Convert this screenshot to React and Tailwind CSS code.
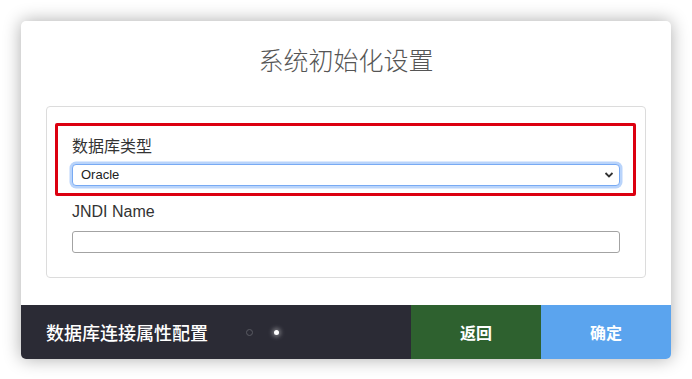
import React from 'react';

const cjk = { fontFamily: '"Noto Sans CJK SC", "Liberation Sans", sans-serif' };
const latin = { fontFamily: '"Liberation Sans", "Noto Sans CJK SC", sans-serif' };

const App = () => {
    return (
        <div className="w-[692px] h-[379px] bg-white pt-[21px] pl-[21px]" style={cjk}>
            <div className="w-[650px] h-[338px] bg-white rounded-[5px] overflow-hidden shadow-[0_0_18px_rgba(0,0,0,0.33)] flex flex-col">
                {/* Title */}
                <h1 className="pt-[22px] text-center text-[25px] leading-[33px] font-extralight text-[#555]">
                    系统初始化设置
                </h1>

                {/* Form panel */}
                <div className="mt-[30px] mx-[25px] border border-[#dcdcdc] rounded-[4px] px-[25px] pt-[26px] pb-[24px]">
                    <div className="relative">
                        {/* highlight box */}
                        <div className="absolute -top-[10px] -left-[17px] -right-[16px] -bottom-[10px] border-[3px] border-[#dc0010] rounded-[2px] pointer-events-none" />
                        <label className="block text-[16px] leading-[24px] text-[#333]">数据库类型</label>
                        <div className="relative mt-[7px]">
                            <select
                                className="block w-full h-[22px] appearance-none bg-white border border-[#78aaf3] rounded-[4px] pl-[8px] text-[13px] text-[#222] outline-none shadow-[0_0_0_2.5px_#b9d4fb]"
                                style={latin}
                                defaultValue="Oracle"
                            >
                                <option>Oracle</option>
                                <option>MySQL</option>
                            </select>
                            <svg className="absolute right-[6px] top-[7px] pointer-events-none" width="10" height="8" viewBox="0 0 10 8">
                                <path d="M1.5 2 L5 5.5 L8.5 2" fill="none" stroke="#333" strokeWidth="1.8" />
                            </svg>
                        </div>
                    </div>

                    <label className="block mt-[14px] text-[16px] leading-[24px] text-[#333]" style={latin}>JNDI Name</label>
                    <input
                        className="block w-full mt-[7px] h-[22px] border border-[#a3a3a3] rounded-[3px] outline-none text-[13px] px-[8px]"
                        style={latin}
                    />
                </div>

                {/* Footer */}
                <div className="mt-auto h-[54px] flex text-white">
                    <div className="w-[390px] bg-[#2b2b35] flex items-center pl-[25px]">
                        <span className="text-[18px] leading-[24px] font-medium">数据库连接属性配置</span>
                        <span className="ml-[38px] w-[7px] h-[7px] rounded-full border border-[#5a5b63]" />
                        <span className="ml-[21px] w-[5px] h-[5px] rounded-full bg-white shadow-[0_0_4px_2px_rgba(255,255,255,0.35)]" />
                    </div>
                    <button className="w-[130px] bg-[#2e612f] text-[16px] font-bold flex items-center justify-center">
                        返回
                    </button>
                    <button className="w-[130px] bg-[#5ba4ee] text-[16px] font-bold flex items-center justify-center">
                        确定
                    </button>
                </div>
            </div>
        </div>
    );
};

export default App;
